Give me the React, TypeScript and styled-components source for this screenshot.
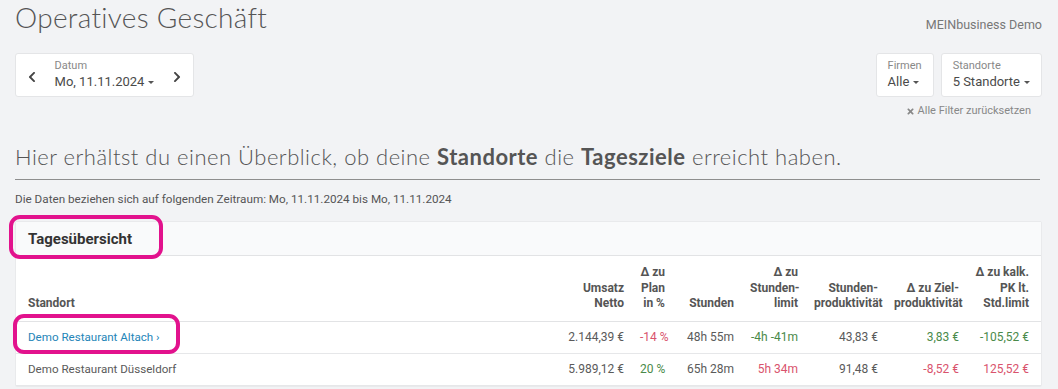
import * as React from "react";
import styled, { createGlobalStyle } from "styled-components";
import { FaChevronLeft, FaChevronRight, FaTimes } from "react-icons/fa";

const GlobalStyle = createGlobalStyle`
  html, body {
    margin: 0;
    padding: 0;
    background: #f2f3f5;
    font-family: Roboto, "Liberation Sans", sans-serif;
    color: #555;
  }
`;

const Page = styled.div`
  padding: 0 16px 0 15px;
`;

const TopBar = styled.div`
  display: flex;
  justify-content: space-between;
  align-items: flex-start;
`;

const LeftColumn = styled.div`
  display: flex;
  flex-direction: column;
  align-items: flex-start;
`;

const RightColumn = styled.div`
  display: flex;
  flex-direction: column;
  align-items: flex-end;
`;

const Title = styled.h1`
  margin: 0;
  font-family: Lato, "Open Sans", sans-serif;
  font-weight: 300;
  font-size: 28px;
  line-height: 34px;
  color: #555;
  letter-spacing: 0.3px;
`;

const Company = styled.div`
  margin-top: 17px;
  font-size: 12.5px;
  line-height: 16px;
  color: #777;
`;

const Selector = styled.div`
  display: flex;
  align-items: center;
  height: 44px;
  box-sizing: border-box;
  background: #fff;
  border: 1px solid #e4e5e7;
  border-radius: 3px;
`;

const DateBox = styled(Selector)`
  margin-top: 19px;
  width: 179px;
  padding: 0 10px 0 10px;
  justify-content: space-between;
`;

const FilterRow = styled.div`
  display: flex;
  gap: 7px;
  margin-top: 20px;
`;

const FilterBox = styled(Selector)<{ $width: number }>`
  padding: 0 11px;
  min-width: ${(p) => p.$width}px;
`;

const SelectorText = styled.div`
  display: flex;
  flex-direction: column;
`;

const SelectorLabel = styled.span`
  font-size: 11px;
  line-height: 14px;
  color: #888;
`;

const SelectorValue = styled.span`
  display: flex;
  align-items: center;
  font-size: 13px;
  line-height: 18px;
  color: #4a4a4a;
  white-space: nowrap;
`;

const Caret = styled.span`
  display: inline-block;
  margin-left: 4px;
  width: 0;
  height: 0;
  border-left: 3px solid transparent;
  border-right: 3px solid transparent;
  border-top: 3px solid #555;
`;

const NavButton = styled.span`
  display: flex;
  align-items: center;
  margin-top: 3px;
  color: #444;
  font-size: 12px;
`;

const ResetLink = styled.div`
  display: flex;
  align-items: center;
  gap: 3px;
  margin-top: 7px;
  margin-right: 11px;
  font-size: 11px;
  line-height: 14px;
  color: #888;
  svg {
    font-size: 9px;
  }
`;

const Lead = styled.h2`
  margin: 25px 0 0;
  font-family: Lato, "Open Sans", sans-serif;
  font-weight: 300;
  font-size: 22px;
  line-height: 28px;
  color: #555;
  letter-spacing: 0.5px;
  b {
    font-weight: 700;
  }
`;

const Divider = styled.hr`
  margin: 8px 2px 0 0;
  border: 0;
  border-top: 1px solid #8e8e8e;
`;

const RangeNote = styled.div`
  margin-top: 12px;
  font-size: 11.7px;
  line-height: 14px;
  color: #555;
`;

const Card = styled.section`
  margin-top: 15px;
  background: #fff;
  border: 1px solid #e9eaec;
  border-radius: 2px;
`;

const CardHeader = styled.div`
  position: relative;
  height: 33px;
  padding: 0 12px;
  display: flex;
  align-items: center;
  background: #f9fafb;
  border-bottom: 1px solid #e2e3e5;
`;

const CardTitle = styled.h3`
  margin: 0;
  font-family: Roboto, "Liberation Sans", sans-serif;
  font-weight: 700;
  font-size: 15px;
  color: #333;
`;

const Marker = styled.span<{ $left: number; $top: number; $w: number; $h: number }>`
  position: absolute;
  left: ${(p) => p.$left}px;
  top: ${(p) => p.$top}px;
  width: ${(p) => p.$w}px;
  height: ${(p) => p.$h}px;
  box-sizing: border-box;
  border: 4px solid #e2128d;
  border-radius: 11px;
  pointer-events: none;
  z-index: 2;
`;

const Table = styled.table`
  width: 100%;
  border-collapse: collapse;
  table-layout: fixed;
  font-size: 12px;
`;

const HeadCell = styled.th`
  padding: 9px 8px;
  vertical-align: bottom;
  text-align: right;
  font-weight: 700;
  line-height: 15.5px;
  color: #555;
  white-space: nowrap;
  border-bottom: 1px solid #e2e3e5;
  &:first-child {
    text-align: left;
    padding-left: 12px;
  }
  &:last-child {
    padding-right: 12px;
  }
`;

const Row = styled.tr`
  border-bottom: 1px solid #e6e7e9;
`;

type Tone = "neutral" | "good" | "bad";

const toneColor: Record<Tone, string> = {
  neutral: "#5a5a5a",
  good: "#4a8a4a",
  bad: "#d9536d",
};

const Cell = styled.td<{ $tone?: Tone }>`
  position: relative;
  padding: 8px;
  line-height: 15px;
  text-align: right;
  white-space: nowrap;
  color: ${(p) => toneColor[p.$tone || "neutral"]};
  &:first-child {
    text-align: left;
    padding-left: 12px;
  }
  &:last-child {
    padding-right: 12px;
  }
`;

const SiteLink = styled.a`
  font-size: 11.6px;
  color: #2485b8;
  text-decoration: none;
`;

const SiteName = styled.span`
  font-size: 11.6px;
`;

const columns: { label: React.ReactNode; width?: number }[] = [
  { label: "Standort" },
  { label: <>Umsatz<br />Netto</>, width: 78 },
  { label: <>Δ zu<br />Plan<br />in %</>, width: 41 },
  { label: "Stunden", width: 69 },
  { label: <>Δ zu<br />Stunden-<br />limit</>, width: 64 },
  { label: <>Stunden-<br />produktivität</>, width: 80 },
  { label: <>Δ zu Ziel-<br />produktivität</>, width: 81 },
  { label: <>Δ zu kalk.<br />PK lt.<br />Std.limit</>, width: 74 },
];

interface SiteRow {
  name: string;
  link?: boolean;
  values: [string, Tone][];
}

const rows: SiteRow[] = [
  {
    name: "Demo Restaurant Altach",
    link: true,
    values: [
      ["2.144,39 €", "neutral"],
      ["-14 %", "bad"],
      ["48h 55m", "neutral"],
      ["-4h -41m", "good"],
      ["43,83 €", "neutral"],
      ["3,83 €", "good"],
      ["-105,52 €", "good"],
    ],
  },
  {
    name: "Demo Restaurant Düsseldorf",
    values: [
      ["5.989,12 €", "neutral"],
      ["20 %", "good"],
      ["65h 28m", "neutral"],
      ["5h 34m", "bad"],
      ["91,48 €", "neutral"],
      ["-8,52 €", "bad"],
      ["125,52 €", "bad"],
    ],
  },
];

export default function App() {
  return (
    <>
      <GlobalStyle />
      <Page>
        <TopBar>
          <LeftColumn>
            <Title>Operatives Geschäft</Title>
            <DateBox>
              <NavButton>
                <FaChevronLeft />
              </NavButton>
              <SelectorText>
                <SelectorLabel>Datum</SelectorLabel>
                <SelectorValue>
                  Mo, 11.11.2024
                  <Caret />
                </SelectorValue>
              </SelectorText>
              <NavButton>
                <FaChevronRight />
              </NavButton>
            </DateBox>
          </LeftColumn>
          <RightColumn>
            <Company>MEINbusiness Demo</Company>
            <FilterRow>
              <FilterBox $width={55}>
                <SelectorText>
                  <SelectorLabel>Firmen</SelectorLabel>
                  <SelectorValue>
                    Alle
                    <Caret />
                  </SelectorValue>
                </SelectorText>
              </FilterBox>
              <FilterBox $width={97}>
                <SelectorText>
                  <SelectorLabel>Standorte</SelectorLabel>
                  <SelectorValue>
                    5 Standorte
                    <Caret />
                  </SelectorValue>
                </SelectorText>
              </FilterBox>
            </FilterRow>
            <ResetLink>
              <FaTimes />
              Alle Filter zurücksetzen
            </ResetLink>
          </RightColumn>
        </TopBar>

        <Lead>
          Hier erhältst du einen Überblick, ob deine <b>Standorte</b> die{" "}
          <b>Tagesziele</b> erreicht haben.
        </Lead>
        <Divider />
        <RangeNote>
          Die Daten beziehen sich auf folgenden Zeitraum: Mo, 11.11.2024 bis Mo,
          11.11.2024
        </RangeNote>

        <Card>
          <CardHeader>
            <CardTitle>Tagesübersicht</CardTitle>
            <Marker $left={-7} $top={-7} $w={154} $h={44} />
          </CardHeader>
          <Table>
            <colgroup>
              {columns.map((c, i) => (
                <col key={i} style={c.width ? { width: c.width } : undefined} />
              ))}
            </colgroup>
            <thead>
              <tr>
                {columns.map((c, i) => (
                  <HeadCell key={i}>{c.label}</HeadCell>
                ))}
              </tr>
            </thead>
            <tbody>
              {rows.map((r) => (
                <Row key={r.name}>
                  <Cell>
                    {r.link ? (
                      <>
                        <SiteLink href="#">{r.name} ›</SiteLink>
                        <Marker $left={-3} $top={-8} $w={167} $h={40} />
                      </>
                    ) : (
                      <SiteName>{r.name}</SiteName>
                    )}
                  </Cell>
                  {r.values.map(([v, tone], i) => (
                    <Cell key={i} $tone={tone}>
                      {v}
                    </Cell>
                  ))}
                </Row>
              ))}
            </tbody>
          </Table>
        </Card>
      </Page>
    </>
  );
}
